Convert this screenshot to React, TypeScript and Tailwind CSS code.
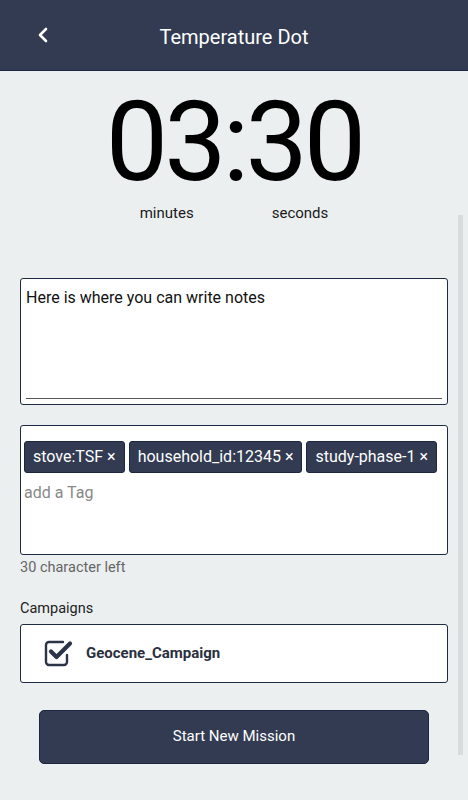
export default function App() {
  const tags = ["stove:TSF", "household_id:12345", "study-phase-1"]

  return (
    <div className="relative w-[468px] h-[800px] overflow-hidden bg-[#eceff0] font-['Roboto',sans-serif]">
      {/* Header */}
      <header className="h-[71px] bg-[#323b52] border-b border-[#1c2640] flex items-center relative">
        <button className="w-[86px] h-full flex items-center justify-center">
          <svg width="14" height="16" viewBox="0 0 14 16" fill="none">
            <path d="M10 2 L4 8 L10 14" stroke="white" strokeWidth="2.6" strokeLinecap="round" strokeLinejoin="round" />
          </svg>
        </button>
        <h1 className="absolute left-0 right-0 top-[23px] text-center text-white text-[20px] leading-[28px] font-normal pointer-events-none">
          Temperature Dot
        </h1>
      </header>

      {/* Timer */}
      <div className="flex flex-col items-center">
        <div className="mt-[16px] text-[111px] leading-[110px] text-black tracking-[-4px] font-normal">03:30</div>
        <div className="flex gap-[78px] mt-[7px] text-[15px] leading-[18px] text-[#1a1a1a]">
          <span>minutes</span>
          <span>seconds</span>
        </div>
      </div>

      <div className="px-[20px] mt-[56px] flex flex-col">
        {/* Notes */}
        <div className="w-[428px] h-[127px] bg-white border border-[#1f2a44] rounded-[3px] px-[5px] pt-[7px] pb-[5px] flex flex-col">
          <p className="text-[16px] text-[#111] leading-[24px] flex-1">Here is where you can write notes</p>
          <div className="h-px bg-[#555]" />
        </div>

        {/* Tags */}
        <div className="mt-[20px] w-[428px] h-[130px] bg-white border border-[#1f2a44] rounded-[3px] px-[3px] pt-[15px]">
          <div className="flex gap-[4px]">
            {tags.map(t => (
              <span key={t} className="h-[32px] px-[8px] flex items-center bg-[#323b52] rounded-[3px] text-white text-[16px] border border-[#1c2640]">
                {t} ×
              </span>
            ))}
          </div>
          <div className="mt-[8px] text-[16px] text-[#888] leading-[24px]">add a Tag</div>
        </div>
        <div className="mt-[2px] text-[14.5px] text-[#666]">30 character left</div>

        {/* Campaigns */}
        <div className="mt-[19px] text-[14.5px] text-[#222]">Campaigns</div>
        <div className="mt-[4px] w-[428px] h-[59px] bg-white border border-[#1f2a44] rounded-[3px] flex items-center pl-[22px] gap-[13px]">
          <svg width="30" height="30" viewBox="0 0 30 30" fill="none">
            <path d="M20 4 H6 a3 3 0 0 0 -3 3 V24 a3 3 0 0 0 3 3 H21 a3 3 0 0 0 3 -3 V17" stroke="#2c3548" strokeWidth="2.4" strokeLinecap="round" />
            <path d="M8 13.5 L13.5 19 L27 5.5" stroke="#2c3548" strokeWidth="4.2" strokeLinecap="round" strokeLinejoin="round" />
          </svg>
          <span className="text-[15px] font-bold text-[#2a3040]">Geocene_Campaign</span>
        </div>

        {/* Button */}
        <button className="mt-[27px] mx-auto w-[390px] h-[54px] bg-[#323b52] border border-[#1c2640] rounded-[5px] text-white text-[15px]">
          Start New Mission
        </button>
      </div>

      {/* scrollbar overlay */}
      <div className="absolute left-[458px] top-[215px] w-[5px] h-[540px] bg-[#d8dcdc]" />
    </div>
  )
}
